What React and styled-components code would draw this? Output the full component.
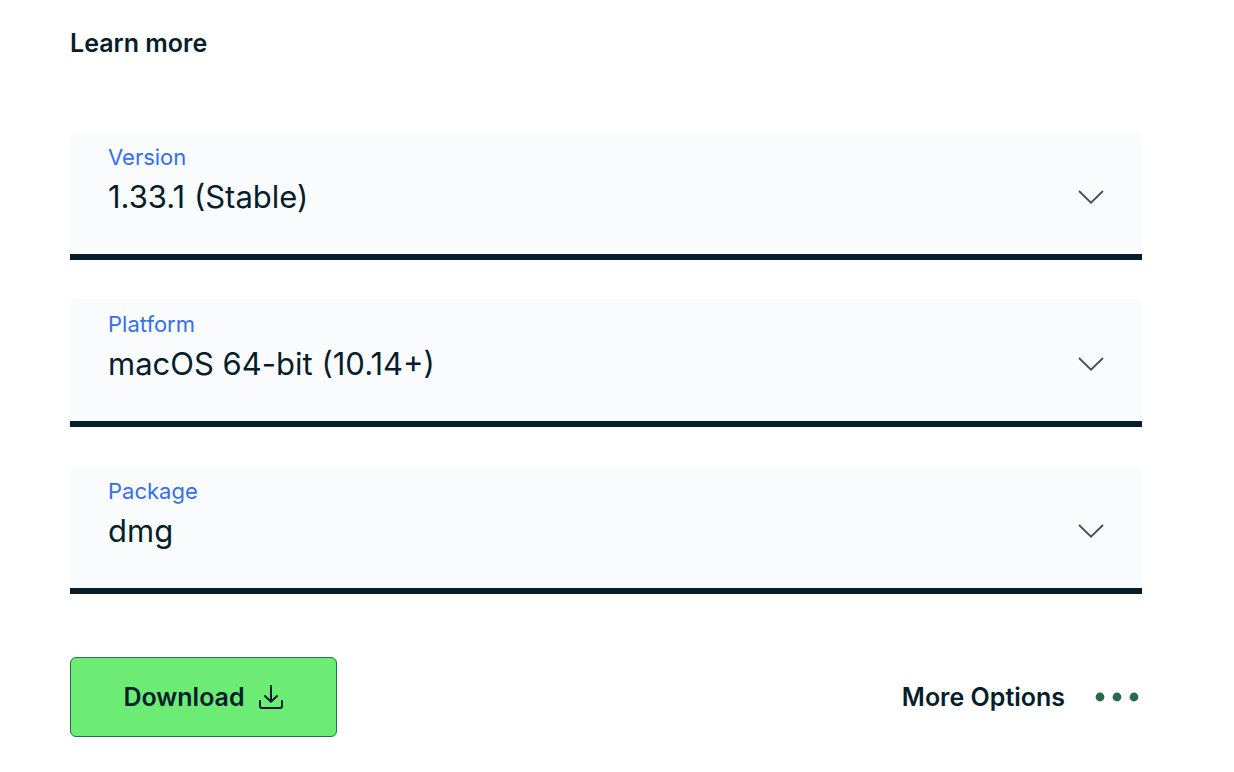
import React, { useId, useState } from "react";
import styled, { createGlobalStyle } from "styled-components";

const GlobalStyle = createGlobalStyle`
  *, *::before, *::after { box-sizing: border-box; }
  body {
    margin: 0;
    background: #ffffff;
    color: #061e2b;
    font-family: Inter, "Liberation Sans", sans-serif;
  }
`;

const Page = styled.main`
  display: flex;
  flex-direction: column;
  padding: 27px 92px 35px 70px;
`;

const LearnMore = styled.a`
  align-self: flex-start;
  font-size: 25px;
  font-weight: 600;
  line-height: 32px;
  color: inherit;
  text-decoration: none;
`;

const Form = styled.form`
  margin-top: 73px;
`;

const Fields = styled.div`
  display: flex;
  flex-direction: column;
  gap: 39px;
`;

const Field = styled.div`
  display: grid;
  grid-template-columns: 1fr 26px;
  grid-template-rows: 27px 51px;
  height: 128px;
  padding: 12px 38px 0;
  border-bottom: 6px solid #061e2b;
  border-radius: 6px 6px 0 0;
  background: #f9fbfd;
`;

const FieldLabel = styled.label`
  grid-column: 1 / -1;
  font-size: 22px;
  line-height: 27px;
  color: #346ff0;
`;

const Select = styled.select`
  grid-area: 2 / 1 / 3 / 3;
  width: 100%;
  padding: 0;
  border: 0;
  appearance: none;
  background: transparent;
  color: inherit;
  font-family: inherit;
  font-size: 31px;
  line-height: 50px;
`;

const Chevron = styled.svg`
  grid-area: 2 / 2 / 3 / 3;
  align-self: center;
  pointer-events: none;
`;

const Actions = styled.div`
  display: flex;
  align-items: center;
  justify-content: space-between;
  margin-top: 63px;
`;

const DownloadButton = styled.button`
  display: flex;
  align-items: center;
  justify-content: center;
  gap: 13px;
  width: 267px;
  height: 80px;
  padding: 0;
  border: 1px solid #276a52;
  border-radius: 6px;
  background: #6ceb75;
  color: inherit;
  font-family: inherit;
  font-size: 25px;
  font-weight: 600;
  line-height: 32px;
`;

const MoreButton = styled.button`
  display: flex;
  align-items: center;
  gap: 30px;
  padding: 0 2px 0 0;
  border: 0;
  background: transparent;
  color: inherit;
  font-family: inherit;
  font-size: 25px;
  font-weight: 600;
  line-height: 32px;
`;

const fields = [
  { label: "Version", value: "1.33.1 (Stable)" },
  { label: "Platform", value: "macOS 64-bit (10.14+)" },
  { label: "Package", value: "dmg" },
];

function SelectField({ label, value }) {
  const id = useId();
  const [selected, setSelected] = useState(value);
  return (
    <Field>
      <FieldLabel htmlFor={id}>{label}</FieldLabel>
      <Select id={id} value={selected} onChange={(e) => setSelected(e.target.value)}>
        <option value={value}>{value}</option>
      </Select>
      <Chevron width="26" height="14" viewBox="0 0 26 14" fill="none" aria-hidden="true">
        <path d="M1 1 13 12.7 25 1" stroke="#40515c" strokeWidth="1.8" />
      </Chevron>
    </Field>
  );
}

export default function App() {
  return (
    <>
      <GlobalStyle />
      <Page>
        <LearnMore href="#learn-more">Learn more</LearnMore>
        <Form onSubmit={(e) => e.preventDefault()}>
          <Fields>
            {fields.map((field) => (
              <SelectField key={field.label} {...field} />
            ))}
          </Fields>
          <Actions>
            <DownloadButton type="submit">
              Download
              <svg width="26" height="26" viewBox="0 0 26 26" fill="none" stroke="#061e2b" strokeWidth="2" strokeLinecap="round" strokeLinejoin="round" aria-hidden="true">
                <path d="M13 2V17.5M7 12 13 17.7 19 12M2 17V22Q2 24 4 24H22Q24 24 24 22V17" />
              </svg>
            </DownloadButton>
            <MoreButton type="button">
              More Options
              <svg width="45" height="10" viewBox="0 0 45 10" fill="#27694d" aria-hidden="true">
                <circle cx="5" cy="5" r="4.4" />
                <circle cx="22" cy="5" r="4.4" />
                <circle cx="39" cy="5" r="4.4" />
              </svg>
            </MoreButton>
          </Actions>
        </Form>
      </Page>
    </>
  );
}
